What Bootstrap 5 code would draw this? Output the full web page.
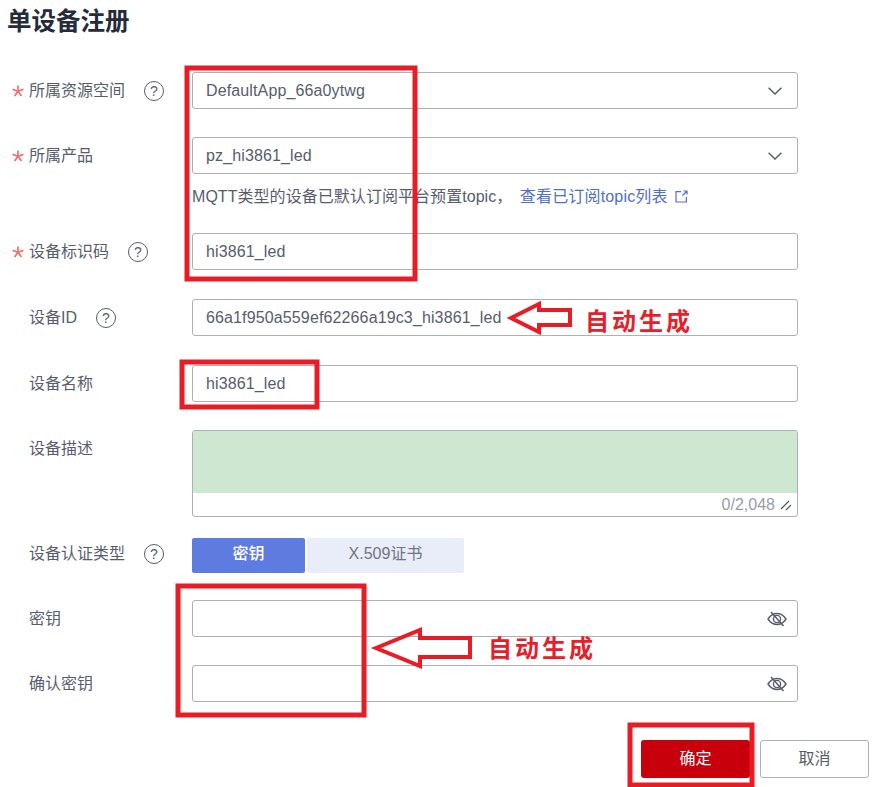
<!DOCTYPE html>
<html lang="zh-CN">
  <head>
    <meta charset="UTF-8" />
    <meta name="viewport" content="width=device-width, initial-scale=1.0" />
    <title>单设备注册</title>
    <link href="https://cdn.jsdelivr.net/npm/bootstrap@5.3.3/dist/css/bootstrap.min.css" rel="stylesheet" />
    <style>
      body {
        font-family: "Liberation Sans", "Noto Sans CJK SC", sans-serif;
        font-size: 16px;
        color: #575d6c;
        background-color: #fff;
      }
      .reg-page {
        position: relative;
        width: 872px;
        height: 787px;
        overflow: hidden;
      }
      .reg-title {
        height: 44px;
        margin: 0 0 28px;
        padding-left: 7px;
        font-size: 24.5px;
        font-weight: 700;
        line-height: 44px;
        color: #252b3a;
      }
      .reg-row {
        display: flex;
        width: 798px;
        margin-bottom: 28px;
      }
      .reg-row.tight { margin-bottom: 29px; }
      .reg-row.reg-auth { margin-top: 21px; margin-bottom: 27px; }
      .reg-label {
        display: flex;
        align-items: center;
        flex: 0 0 192px;
        height: 37px;
        padding-left: 29px;
        position: relative;
        line-height: 1;
      }
      .reg-auth .reg-label { height: 31px; }
      .reg-star {
        position: absolute;
        left: 12px;
        top: 13px;
        width: 12px;
        height: 12px;
      }
      .reg-tip {
        display: inline-flex;
        align-items: center;
        justify-content: center;
        width: 20px;
        height: 20px;
        margin-left: 19px;
        border: 1.4px solid #575d6c;
        border-radius: 50%;
        font-size: 14px;
      }
      .reg-field {
        flex: 1 1 auto;
        min-width: 0;
        position: relative;
      }
      .reg-input.form-control,
      .reg-input.form-select {
        height: 37px;
        padding: 0 13px;
        border: 1px solid #adb0b8;
        border-radius: 3px;
        font-size: 16px;
        letter-spacing: .13px;
        color: #575d6c;
        box-shadow: none;
      }
      .reg-input.form-select {
        background-image: url("data:image/svg+xml,%3csvg xmlns='http://www.w3.org/2000/svg' viewBox='0 0 14 8'%3e%3cpath fill='none' stroke='%23575d6c' stroke-width='1.500' d='M.6.8 7 7l6.400-6.200'/%3e%3c/svg%3e");
        background-position: right 15px center;
        background-size: 14px 8px;
      }
      .reg-eye {
        position: absolute;
        right: 11px;
        top: 9px;
        width: 20px;
        height: 20px;
      }
      .reg-help {
        height: 59px;
        margin: -28px 0 0;
        padding: 10px 0 0 192px;
        line-height: 26px;
        white-space: nowrap;
        letter-spacing: .05px;
      }
      .reg-help a {
        margin-left: 3px;
        letter-spacing: .17px;
        color: #526ecc;
        text-decoration: none;
      }
      .reg-help svg { margin-left: 3px; vertical-align: -1px; }
      .reg-area {
        height: 87px;
        border: 1px solid #adb0b8;
        border-radius: 3px;
        overflow: hidden;
      }
      .reg-area textarea.form-control {
        display: block;
        height: 62px;
        border: 0;
        border-radius: 0;
        background-color: #cde7d0;
        resize: none;
      }
      .reg-count {
        display: flex;
        justify-content: flex-end;
        align-items: center;
        gap: 5px;
        height: 23px;
        padding-right: 5px;
        color: #9a9da6;
      }
      .reg-switch { gap: 2px; }
      .reg-switch .btn {
        height: 35px;
        padding: 0 0 3px;
        border: 0;
        border-radius: 2px;
        font-size: 16px;
      }
      .reg-on.btn { width: 113px; background-color: #5e7ce0; color: #fff; font-weight: 500; }
      .reg-off.btn { width: 157px; background-color: #e9edfa; color: #71757f; }
      .reg-actions {
        display: flex;
        justify-content: flex-end;
        gap: 10px;
        width: 869px;
        margin-top: 38px;
      }
      .reg-actions .btn {
        width: 109px;
        height: 38px;
        padding: 0;
        border-radius: 3px;
        font-size: 16px;
      }
      .reg-ok.btn { border: 0; background-color: #c7000b; color: #fff; }
      .reg-cancel.btn { border: 1px solid #adb0b8; background-color: #fff; color: #575d6c; }
      /* red annotations pasted over the form */
      .reg-marks {
        position: absolute;
        left: 0;
        top: 0;
        pointer-events: none;
      }
      .reg-note {
        position: absolute;
        font-size: 24px;
        font-weight: 700;
        line-height: 1;
        letter-spacing: 3px;
        color: #e5202a;
        white-space: nowrap;
      }
      .reg-note.one { left: 585px; top: 310px; }
      .reg-note.two { left: 488px; top: 637px; }
    </style>
  </head>
  <body class="m-0">
    <svg width="0" height="0" class="position-absolute">
      <symbol id="star" viewBox="0 0 12 12">
        <path d="M6 .5v5.700M6 6.200.6 4.400M6 6.200l5.400-1.800M6 6.200 2.600 11M6 6.200 9.400 11" fill="none" stroke="#f0716b" stroke-width="1.700" />
      </symbol>
      <symbol id="eye" viewBox="0 0 20 20">
        <path d="M1 10c2.400-3.700 5.400-5.500 9-5.500s6.600 1.800 9 5.500c-2.400 3.700-5.400 5.500-9 5.500S3.400 13.700 1 10z" fill="none" stroke="#575d6c" stroke-width="1.400" />
        <circle cx="10" cy="10" r="3.600" fill="none" stroke="#575d6c" stroke-width="1.400" />
        <path d="M4 3l12.500 14" fill="none" stroke="#575d6c" stroke-width="1.500" />
      </symbol>
    </svg>

    <div class="reg-page">
      <h1 class="reg-title">单设备注册</h1>

      <form>
        <div class="reg-row">
          <label class="reg-label"><svg class="reg-star"><use href="#star" /></svg>所属资源空间<span class="reg-tip">?</span></label>
          <div class="reg-field">
            <select class="form-select reg-input"><option>DefaultApp_66a0ytwg</option></select>
          </div>
        </div>

        <div class="reg-row">
          <label class="reg-label"><svg class="reg-star"><use href="#star" /></svg>所属产品</label>
          <div class="reg-field">
            <select class="form-select reg-input"><option>pz_hi3861_led</option></select>
          </div>
        </div>
        <div class="reg-help">
          MQTT类型的设备已默认订阅平台预置topic， <a href="#">查看已订阅topic列表</a>
          <svg width="13" height="13" viewBox="0 0 13 13" fill="none" stroke="#526ecc" stroke-width="1.200">
            <path d="M6 1.600H1v10.400h10.400V7M7.500 5.500 12 1M8.500 1H12v3.500" />
          </svg>
        </div>

        <div class="reg-row tight">
          <label class="reg-label"><svg class="reg-star"><use href="#star" /></svg>设备标识码<span class="reg-tip">?</span></label>
          <div class="reg-field"><input class="form-control reg-input" value="hi3861_led" /></div>
        </div>

        <div class="reg-row tight">
          <label class="reg-label">设备ID<span class="reg-tip">?</span></label>
          <div class="reg-field"><input class="form-control reg-input" value="66a1f950a559ef62266a19c3_hi3861_led" /></div>
        </div>

        <div class="reg-row">
          <label class="reg-label">设备名称</label>
          <div class="reg-field"><input class="form-control reg-input" value="hi3861_led" /></div>
        </div>

        <div class="reg-row mb-0">
          <label class="reg-label">设备描述</label>
          <div class="reg-field reg-area">
            <textarea class="form-control"></textarea>
            <div class="reg-count">
              0/2,048
              <svg width="12" height="12" viewBox="0 0 12 12" fill="none" stroke="#575d6c" stroke-width="1.300">
                <path d="M1 10 9 2M6 11l5-5" />
              </svg>
            </div>
          </div>
        </div>

        <div class="reg-row reg-auth">
          <label class="reg-label">设备认证类型<span class="reg-tip">?</span></label>
          <div class="d-flex reg-switch">
            <button type="button" class="btn reg-on">密钥</button>
            <button type="button" class="btn reg-off">X.509证书</button>
          </div>
        </div>

        <div class="reg-row">
          <label class="reg-label">密钥</label>
          <div class="reg-field">
            <input class="form-control reg-input" type="password" />
            <svg class="reg-eye"><use href="#eye" /></svg>
          </div>
        </div>

        <div class="reg-row mb-0">
          <label class="reg-label">确认密钥</label>
          <div class="reg-field">
            <input class="form-control reg-input" type="password" />
            <svg class="reg-eye"><use href="#eye" /></svg>
          </div>
        </div>

        <div class="reg-actions">
          <button type="button" class="btn reg-ok">确定</button>
          <button type="button" class="btn reg-cancel">取消</button>
        </div>
      </form>

      <svg class="reg-marks" width="872" height="787" fill="none" stroke="#e91c25" stroke-width="5">
        <rect x="187" y="68" width="228" height="211" />
        <rect x="182" y="362" width="135" height="45" />
        <rect x="178" y="586" width="186" height="129" />
        <rect x="630" y="725" width="122" height="60" />
        <path d="M511 318 539 304v6h31v15h-31v7z" stroke-width="4" />
        <path d="M376 648 420 630v8h50v19h-50v9z" stroke-width="4" />
      </svg>
      <span class="reg-note one">自动生成</span>
      <span class="reg-note two">自动生成</span>
    </div>

    <script src="https://cdn.jsdelivr.net/npm/bootstrap@5.3.3/dist/js/bootstrap.bundle.min.js"></script>
  </body>
</html>
